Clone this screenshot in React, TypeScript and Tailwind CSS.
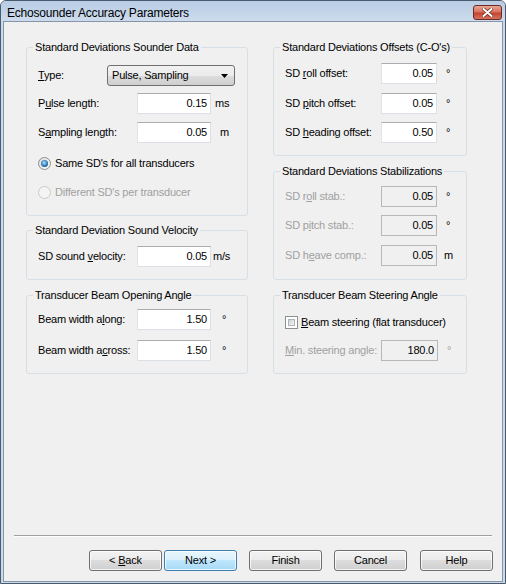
import React from "react";

const btnGray =
  "border-[#707070] bg-[linear-gradient(to_bottom,#f2f2f2_0%,#ebebeb_50%,#dddddd_50%,#cfcfcf_100%)]";
const btnBlue =
  "border-[#3c7fb1] bg-[linear-gradient(to_bottom,#eaf6fd_0%,#d9f0fc_50%,#bee6fd_50%,#a7d9f5_100%)]";

function Field({ value, className, disabled = false }: { value: string; className: string; disabled?: boolean }) {
  return (
    <div
      className={`${className} h-[21px] shrink-0 flex items-center justify-end pr-[3px] border ${
        disabled
          ? "border-[#b5b8bb] bg-[#f0f0f0]"
          : "border-[#dbdfe6] border-t-[#abadb3] border-l-[#e2e3ea] bg-white"
      }`}
    >
      {value}
    </div>
  );
}

function Radio({ checked = false, disabled = false }: { checked?: boolean; disabled?: boolean }) {
  return (
    <svg width="13" height="13" viewBox="0 0 13 13" className="shrink-0">
      <defs>
        <radialGradient id="rdot" cx="45%" cy="40%" r="65%">
          <stop offset="0" stopColor="#b9e4fb" />
          <stop offset="0.6" stopColor="#3c86c0" />
          <stop offset="1" stopColor="#1a4f80" />
        </radialGradient>
        <linearGradient id="rbg" x1="0" y1="0" x2="1" y2="1">
          <stop offset="0" stopColor="#dcdcdc" />
          <stop offset="1" stopColor="#fbfbfb" />
        </linearGradient>
      </defs>
      <circle cx="6.5" cy="6.5" r="6" fill={disabled ? "#f4f4f4" : "url(#rbg)"} stroke={disabled ? "#c9c9c9" : "#8e8f8f"} />
      {checked && <circle cx="6.5" cy="6.5" r="3.5" fill="url(#rdot)" />}
    </svg>
  );
}

function Check() {
  return (
    <div className="w-[13px] h-[13px] shrink-0 border border-[#8e8f8f] bg-white p-[2px]">
      <div className="w-full h-full border border-[#aeb3b9] bg-[linear-gradient(135deg,#cbcfd5,#f6f6f6)]" />
    </div>
  );
}

function Btn({ children, def = false, className = "" }: { children: React.ReactNode; def?: boolean; className?: string }) {
  return (
    <div
      className={`${className} w-[73px] h-[21px] shrink-0 flex items-center justify-center rounded-[3px] border ${
        def ? btnBlue : btnGray
      } shadow-[inset_0_0_0_1px_rgba(255,255,255,0.75)]`}
    >
      <span>{children}</span>
    </div>
  );
}

function Legend({ children }: { children: React.ReactNode }) {
  return <legend className="ml-[-5px] px-[2px] leading-[14px]">{children}</legend>;
}

export default function App() {
  return (
    <div className="w-[506px] h-[584px] flex flex-col border border-[#4a5a6e] rounded-t-[6px] bg-[#cbd9ea] font-['Liberation_Sans',Arial,sans-serif] text-[11px] tracking-[-0.2px] text-black overflow-hidden">
      {/* title bar */}
      <div className="h-[20px] flex items-start justify-between pl-[6px] pr-[3px] bg-[linear-gradient(to_bottom,#b8cce4,#cddbec)]">
        <span className="mt-[5px] leading-[14px] text-[12px]">Echosounder Accuracy Parameters</span>
        <div className="mt-[4px] w-[29px] h-[15px] flex items-center justify-center rounded-[3px] border border-[#6b2b24] bg-[linear-gradient(to_bottom,#e9a593_0%,#d8735f_45%,#c5432e_55%,#d57460_100%)]">
          <svg width="11" height="9" viewBox="0 0 11 9">
            <path d="M1.5 1 L9.5 8 M9.5 1 L1.5 8" stroke="#6e2a20" strokeWidth="3.4" strokeLinecap="round" />
            <path d="M1.5 1 L9.5 8 M9.5 1 L1.5 8" stroke="#ffffff" strokeWidth="2" strokeLinecap="round" />
          </svg>
        </div>
      </div>

      {/* client area */}
      <div className="flex-1 mx-[2px] mb-[1px] flex flex-col border border-[#8596aa] bg-[#f0f0f0]">
        <div className="flex pl-[22px] pt-[18px] gap-[25px]">
          {/* left column */}
          <div className="w-[222px] flex flex-col">
            <fieldset className="min-w-0 border border-[#d5dfe5] rounded-[3px] px-[11px] pt-[11px] pb-[15px]">
              <Legend>Standard Deviations Sounder Data</Legend>
              <div className="flex items-center h-[21px]">
                <span className="w-[69px] shrink-0">
                  <u>T</u>ype:
                </span>
                <div className={`w-[128px] h-[21px] shrink-0 flex items-center justify-between pl-[4px] pr-[6px] rounded-[3px] border ${btnGray}`}>
                  <span>Pulse, Sampling</span>
                  <svg width="7" height="4" viewBox="0 0 7 4">
                    <path d="M0 0 H7 L3.5 4 Z" fill="#000" />
                  </svg>
                </div>
              </div>
              <div className="flex items-center h-[21px] mt-[7px]">
                <span className="w-[99px] shrink-0">
                  P<u>u</u>lse length:
                </span>
                <Field value="0.15" className="w-[74px]" />
                <span className="pl-[4px]">ms</span>
              </div>
              <div className="flex items-center h-[21px] mt-[8px]">
                <span className="w-[99px] shrink-0">
                  S<u>a</u>mpling length:
                </span>
                <Field value="0.05" className="w-[74px]" />
                <span className="pl-[9px]">m</span>
              </div>
              <div className="flex items-center h-[16px] mt-[12px]">
                <Radio checked />
                <span className="ml-[4px]">{"Same SD's for all transducers"}</span>
              </div>
              <div className="flex items-center h-[16px] mt-[13px] text-[#a0a0a0]">
                <Radio disabled />
                <span className="ml-[4px]">{"Different SD's per transducer"}</span>
              </div>
            </fieldset>

            <fieldset className="mt-[7px] min-w-0 border border-[#d5dfe5] rounded-[3px] px-[11px] pt-[9px] pb-[12px]">
              <Legend>Standard Deviation Sound Velocity</Legend>
              <div className="flex items-center h-[21px]">
                <span className="w-[99px] shrink-0">
                  SD sound <u>v</u>elocity:
                </span>
                <Field value="0.05" className="w-[74px]" />
                <span className="pl-[2px]">m/s</span>
              </div>
            </fieldset>

            <fieldset className="mt-[8px] min-w-0 border border-[#d5dfe5] rounded-[3px] px-[11px] pt-[7px] pb-[12px]">
              <Legend>Transducer Beam Opening Angle</Legend>
              <div className="flex items-center h-[21px]">
                <span className="w-[99px] shrink-0">
                  Beam width a<u>l</u>ong:
                </span>
                <Field value="1.50" className="w-[74px]" />
                <span className="pl-[11px]">°</span>
              </div>
              <div className="flex items-center h-[21px] mt-[10px]">
                <span className="w-[99px] shrink-0">
                  Beam width a<u>c</u>ross:
                </span>
                <Field value="1.50" className="w-[74px]" />
                <span className="pl-[11px]">°</span>
              </div>
            </fieldset>
          </div>

          {/* right column */}
          <div className="w-[194px] flex flex-col">
            <fieldset className="min-w-0 border border-[#d5dfe5] rounded-[3px] pl-[11px] pr-[4px] pt-[9px] pb-[12px]">
              <Legend>{"Standard Deviations Offsets (C-O's)"}</Legend>
              <div className="flex items-center h-[21px]">
                <span className="w-[96px] shrink-0">
                  SD <u>r</u>oll offset:
                </span>
                <Field value="0.05" className="w-[56px]" />
                <span className="pl-[9px]">°</span>
              </div>
              <div className="flex items-center h-[21px] mt-[9px]">
                <span className="w-[96px] shrink-0">
                  SD <u>p</u>itch offset:
                </span>
                <Field value="0.05" className="w-[56px]" />
                <span className="pl-[9px]">°</span>
              </div>
              <div className="flex items-center h-[21px] mt-[8px]">
                <span className="w-[96px] shrink-0">
                  SD <u>h</u>eading offset:
                </span>
                <Field value="0.50" className="w-[56px]" />
                <span className="pl-[9px]">°</span>
              </div>
            </fieldset>

            <fieldset className="mt-[8px] min-w-0 border border-[#d5dfe5] rounded-[3px] pl-[11px] pr-[4px] pt-[8px] pb-[13px]">
              <Legend>Standard Deviations Stabilizations</Legend>
              <div className="flex items-center h-[21px]">
                <span className="w-[96px] shrink-0 text-[#a0a0a0]">
                  SD r<u>o</u>ll stab.:
                </span>
                <Field value="0.05" className="w-[56px]" disabled />
                <span className="pl-[9px]">°</span>
              </div>
              <div className="flex items-center h-[21px] mt-[8px]">
                <span className="w-[96px] shrink-0 text-[#a0a0a0]">
                  SD p<u>i</u>tch stab.:
                </span>
                <Field value="0.05" className="w-[56px]" disabled />
                <span className="pl-[9px]">°</span>
              </div>
              <div className="flex items-center h-[21px] mt-[9px]">
                <span className="w-[96px] shrink-0 text-[#a0a0a0]">
                  SD h<u>e</u>ave comp.:
                </span>
                <Field value="0.05" className="w-[56px]" disabled />
                <span className="pl-[7px]">m</span>
              </div>
            </fieldset>

            <fieldset className="mt-[8px] min-w-0 border border-[#d5dfe5] rounded-[3px] pl-[11px] pr-[4px] pt-[12px] pb-[12px]">
              <Legend>Transducer Beam Steering Angle</Legend>
              <div className="flex items-center h-[16px]">
                <Check />
                <span className="ml-[3px]">
                  <u>B</u>eam steering (flat transducer)
                </span>
              </div>
              <div className="flex items-center h-[21px] mt-[10px]">
                <span className="w-[96px] shrink-0 text-[#a0a0a0]">
                  <u>M</u>in. steering angle:
                </span>
                <Field value="180.0" className="w-[57px]" disabled />
                <span className="pl-[9px] text-[#a0a0a0]">°</span>
              </div>
            </fieldset>
          </div>
        </div>

        <div className="flex-1" />

        {/* separator + buttons */}
        <div className="mx-[10px] border-t border-t-[#a0a0a0] border-b border-b-white" />
        <div className="flex justify-end pr-[9px] mt-[13px] mb-[10px]">
          <Btn>
            {"< "}
            <u>B</u>ack
          </Btn>
          <Btn def className="ml-[2px]">
            Next &gt;
          </Btn>
          <Btn className="ml-[12px]">Finish</Btn>
          <Btn className="ml-[12px]">Cancel</Btn>
          <Btn className="ml-[13px]">Help</Btn>
        </div>
      </div>
    </div>
  );
}
